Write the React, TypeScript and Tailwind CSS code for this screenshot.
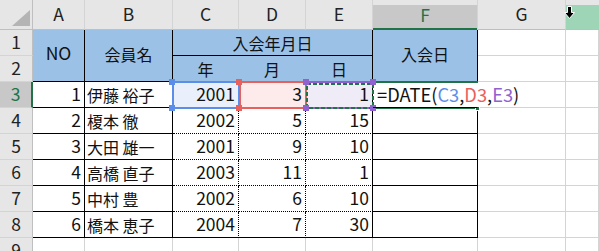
import React from "react";

const F = { fontFamily: '"Noto Sans CJK JP", "Noto Sans", sans-serif' };

const R: Record<string, string> = {
  g: "border-r border-r-[#d4d4d4]",
  s: "border-r border-r-black",
  d: "border-r border-r-black [border-right-style:dotted]",
  n: "border-r border-r-transparent",
};
const B: Record<string, string> = {
  g: "border-b border-b-[#d4d4d4]",
  s: "border-b border-b-black",
  d: "border-b border-b-black [border-bottom-style:dotted]",
  n: "border-b border-b-transparent",
};

function C({
  r = "g",
  b = "g",
  cls = "",
  align = "end",
  children,
}: {
  r?: string;
  b?: string;
  cls?: string;
  align?: "end" | "start" | "center";
  children?: React.ReactNode;
}) {
  const a =
    align === "end"
      ? "justify-end pr-[3px]"
      : align === "start"
      ? "justify-start pl-[2px]"
      : "justify-center";
  return (
    <div className={`flex items-center whitespace-nowrap ${a} ${R[r]} ${B[b]} ${cls}`}>
      {children}
    </div>
  );
}

const data = [
  [1, "伊藤 裕子", 2001, 3, 1],
  [2, "榎本 徹", 2002, 5, 15],
  [3, "大田 雄一", 2001, 9, 10],
  [4, "高橋 直子", 2003, 11, 1],
  [5, "中村 豊", 2002, 6, 10],
  [6, "橋本 恵子", 2004, 7, 30],
];

const blue = "bg-[#9bc2e6]";

function J({ children }: { children: React.ReactNode }) {
  return <span className="text-[16px]">{children}</span>;
}

export default function App() {
  return (
    <div
      className="relative w-[599px] h-[251px] overflow-hidden bg-white text-[17.5px] text-[#111]"
      style={F}
    >
      <div className="grid grid-cols-[33px_52px_88px_66px_67px_67px_105px_88px_1fr] grid-rows-[30px_repeat(9,26px)]">
        {/* header row */}
        <div className="relative bg-[#e6e6e6] border-r border-r-[#bfbfbf] border-b border-b-[#bfbfbf]">
          <svg className="absolute left-[12px] top-[10px]" width="18" height="16" viewBox="0 0 18 16">
            <polygon points="18,0 18,16 0,16" fill="#b4b4b4" />
          </svg>
        </div>
        {["A", "B", "C", "D", "E"].map((l) => (
          <div
            key={l}
            className="flex items-center justify-center bg-[#e6e6e6] border-r border-r-[#d4d4d4] border-b border-b-[#bfbfbf] text-[#222]"
          >
            {l}
          </div>
        ))}
        <div className="relative flex items-center justify-center bg-[#e6e6e6] border-r border-r-[#d4d4d4] text-[#217346]">
          <div className="absolute left-0 right-0 top-[5px] bottom-0 bg-[#c8c8c8] border-b-2 border-b-[#217346]" />
          <span className="relative">F</span>
        </div>
        <div className="flex items-center justify-center bg-[#e6e6e6] border-r border-r-[#d4d4d4] border-b border-b-[#bfbfbf] text-[#222]">
          G
        </div>
        <div className="relative bg-[#e6e6e6] border-b border-b-[#bfbfbf]">
          <div className="absolute left-0 right-0 top-[5px] bottom-0 bg-[#9fd5b7]" />
        </div>

        {/* row 1 */}
        <RowHead n={1} />
        <C r="s" b="s" align="center" cls={`row-span-2 ${blue} pb-[4px]`}>NO</C>
        <C r="s" b="s" align="center" cls={`row-span-2 ${blue} pb-[4px]`}><J>会員名</J></C>
        <C r="s" b="s" align="center" cls={`col-span-3 ${blue}`}><J>入会年月日</J></C>
        <C r="s" b="s" align="center" cls={`row-span-2 ${blue} pb-[4px]`}><J>入会日</J></C>
        <C />
        <C />

        {/* row 2 */}
        <RowHead n={2} />
        <C r="n" b="s" align="center" cls={blue}><J>年</J></C>
        <C r="n" b="s" align="center" cls={blue}><J>月</J></C>
        <C r="s" b="s" align="center" cls={blue}><J>日</J></C>
        <C />
        <C />

        {data.map((row, i) => {
          const last = i === data.length - 1;
          const first = i === 0;
          return (
            <React.Fragment key={i}>
              <RowHead n={i + 3} sel={first} />
              <C r="s" b="s">{row[0]}</C>
              <C r="s" b="s" align="start"><J>{row[1]}</J></C>
              <C r="d" b={last ? "s" : "d"} cls={first ? "bg-[#e9effb]" : ""}>{row[2]}</C>
              <C r="d" b={last ? "s" : "d"} cls={first ? "bg-[#fdeaea]" : ""}>{row[3]}</C>
              <C r="s" b={last ? "s" : "d"} cls={first ? "bg-[#efebf7]" : ""}>{row[4]}</C>
              {first ? (
                <C r="n" b="s" align="start" cls="pl-[4px] overflow-visible z-10">
                  <span className="text-[18.3px]">
                    =DATE(<span className="text-[#5b8ee8]">C3</span>,
                    <span className="text-[#e8605c]">D3</span>,
                    <span className="text-[#9062d0]">E3</span>)
                  </span>
                </C>
              ) : (
                <C r="s" b="s" />
              )}
              <C />
              <C />
            </React.Fragment>
          );
        })}

        {/* row 9 */}
        <RowHead n={9} />
        {Array.from({ length: 8 }).map((_, k) => (
          <C key={k} />
        ))}
      </div>

      {/* reference highlight: C3 blue */}
      <div className="absolute left-[172px] top-[81px] w-[68px] h-[28px] border-2 border-[#5b8ee8]" />
      {/* D3 red */}
      <div className="absolute left-[239px] top-[81px] w-[68px] h-[28px] border-2 border-[#e8605c]" />
      {/* E3 purple + marching ants */}
      <div className="absolute left-[306px] top-[81px] w-[68px] h-[28px] border-t-2 border-b-2 border-[#9062d0]" />
      <svg className="absolute left-[305px] top-[82px]" width="70" height="28" viewBox="0 0 70 28">
        <rect x="2" y="2" width="66" height="24" fill="none" stroke="#217346" strokeWidth="2" strokeDasharray="4 2" />
      </svg>
      {/* F3 active top/bottom */}
      <div className="absolute left-[374px] top-[81px] w-[104px] h-[2px] bg-[#217346]" />
      <div className="absolute left-[374px] top-[107px] w-[104px] h-[2px] bg-[#217346]" />
      <div className="absolute left-[475px] top-[106px] w-[5px] h-[5px] bg-[#217346] border border-white" />

      {/* corner squares */}
      <Sq x={172} y={82} c="bg-[#5b8ee8]" />
      <Sq x={172} y={108} c="bg-[#5b8ee8]" />
      <Sq x={239} y={82} c="bg-[#e8605c]" />
      <Sq x={239} y={108} c="bg-[#e8605c]" />
      <Sq x={306} y={82} c="bg-[#9062d0]" />
      <Sq x={306} y={108} c="bg-[#9062d0]" />
      <Sq x={373} y={82} c="bg-[#9062d0]" />
      <Sq x={373} y={108} c="bg-[#9062d0]" />

      {/* column select cursor */}
      <svg className="absolute left-[564px] top-[6px]" width="11" height="13" viewBox="0 0 11 13">
        <path d="M3.5 0.5 H7.5 V6.5 H10.5 L5.5 12.5 L0.5 6.5 H3.5 Z" fill="#000" stroke="#fff" strokeWidth="1" />
      </svg>
    </div>
  );
}

function Sq({ x, y, c }: { x: number; y: number; c: string }) {
  return (
    <div
      className={`absolute w-[6px] h-[6px] ${c}`}
      style={{ left: x - 3, top: y - 3 }}
    />
  );
}

function RowHead({ n, sel = false }: { n: number; sel?: boolean }) {
  return sel ? (
    <div className="flex items-center justify-center bg-[#c8c8c8] border-r-2 border-r-[#217346] border-b border-b-[#d4d4d4] text-[#217346]">
      {n}
    </div>
  ) : (
    <div className="flex items-center justify-center bg-[#e6e6e6] border-r border-r-[#bfbfbf] border-b border-b-[#d4d4d4] text-[#222]">
      {n}
    </div>
  );
}
